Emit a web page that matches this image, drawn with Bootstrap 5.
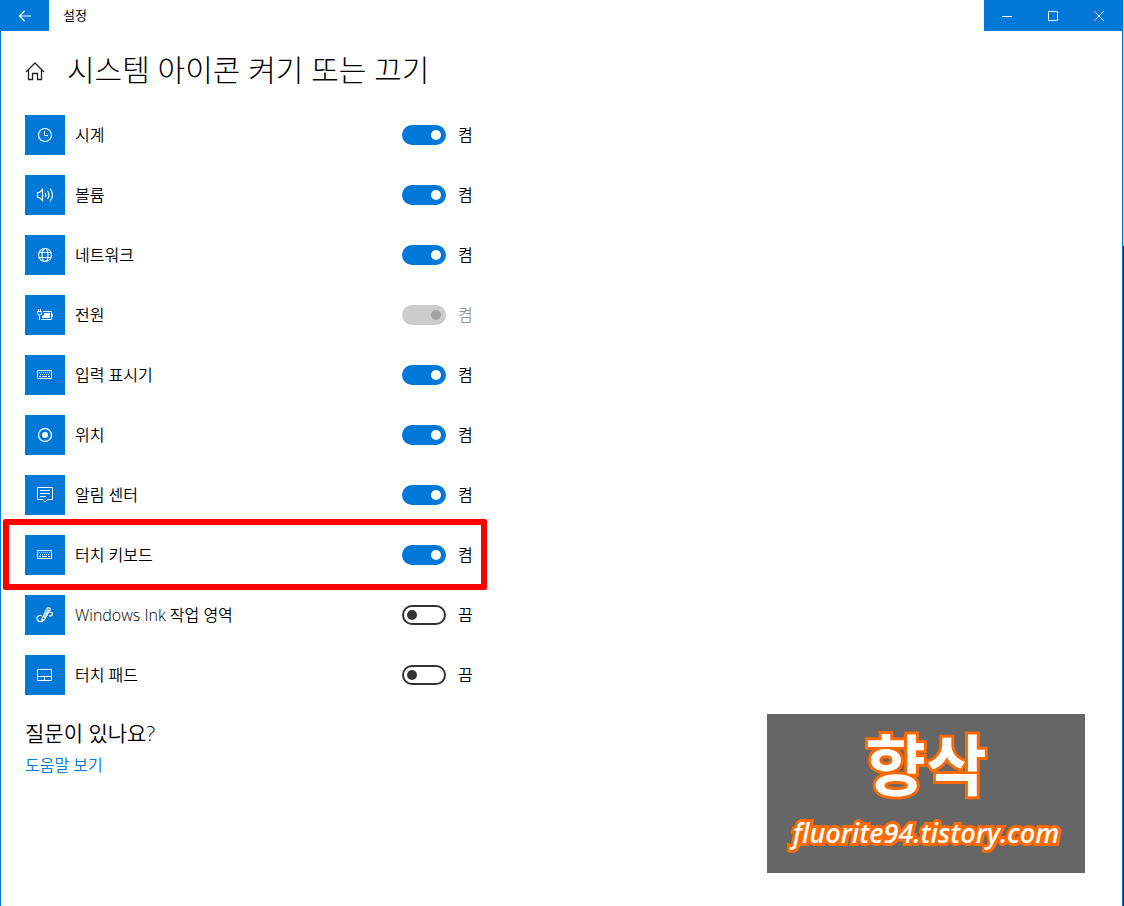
<!DOCTYPE html>
<html lang="ko">
<head>
<meta charset="utf-8">
<meta name="viewport" content="width=device-width, initial-scale=1">
<title>설정</title>
<link href="https://cdn.jsdelivr.net/npm/bootstrap@5.3.0/dist/css/bootstrap.min.css" rel="stylesheet">
<style>
  :root { --accent: #0078d7; }
  body { font-family: "Open Sans", "Noto Sans CJK KR", sans-serif; font-size: 16px; font-weight: 350; line-height: 20px; color: #000; background: #fff; }
  .app-window { border-left: 1px solid var(--accent); border-right: 1px solid var(--accent); }
  .desktop-edge { width: 1px; background: linear-gradient(#c4ccd4 246px, #000 246px); }
  .bar-btn { width: 46px; height: 31px; border: 0; padding: 0; background: var(--accent); color: #fff; }
  .bar-btn.back { width: 48px; }
  .bar-title { font-size: 13px; font-weight: 400; padding: 0 0 2px 14px; }
  svg { display: block; fill: none; stroke: currentColor; }
  .page-body { padding: 19px 24px 24px; }
  .page-title { font-size: 30px; line-height: 40px; padding-bottom: 2px; font-weight: 300; }
  .page-head { gap: 22px; margin-bottom: 23px; }
  .home-link { color: #222; }
  .setting-list { max-width: 448px; gap: 20px; }
  .setting { gap: 12px; }
  .setting label { margin-left: -2px; }
  .tile { width: 40px; height: 40px; background: var(--accent); color: #fff; }
  .state { width: 15px; white-space: nowrap; }
  .toggle { appearance: none; width: 44px; height: 20px; margin: 0; padding: 3px; border: 2px solid #333; border-radius: 10px; display: flex; align-items: center; background: #fff; color: #333; }
  .toggle::before { content: ""; width: 10px; height: 10px; border-radius: 50%; background: currentColor; }
  .toggle:checked { background: var(--accent); border-color: var(--accent); color: #fff; justify-content: flex-end; }
  .toggle:disabled { background: #ccc; border-color: #ccc; color: #a3a3a3; }
  .toggle:disabled + .state { color: #999; }
  .highlight { position: absolute; inset: -16px -14px -15px -22px; border: 6px solid #f00; border-radius: 2px; pointer-events: none; }
  .help-title { font-size: 21px; line-height: 28px; font-weight: 350; margin: 24px 0 8px; }
  .help-link { color: var(--accent); text-decoration: none; }
  .watermark { position: absolute; right: 39px; bottom: 33px; width: 318px; height: 159px; background: #666; color: #fff; -webkit-text-stroke: 6px #ff6a00; paint-order: stroke fill; stroke-linejoin: round; }
  .watermark .mark-name { font-size: 66px; line-height: 80px; font-weight: 700; margin-top: 10px; }
  .watermark .mark-url { font-size: 27px; line-height: 40px; font-weight: 600; font-style: italic; margin-top: 9px; }
</style>
</head>
<body>
<div class="d-flex min-vh-100 position-relative">
  <div class="app-window flex-grow-1">
    <header class="d-flex align-items-center">
      <button class="bar-btn back d-flex align-items-center justify-content-center" type="button" aria-label="뒤로">
        <svg width="14" height="12" viewBox="0 0 14 12" stroke-width="1.2"><path d="M13 6H1.500M6.500 1L1.500 6l5 5"/></svg>
      </button>
      <div class="bar-title me-auto">설정</div>
      <button class="bar-btn d-flex align-items-center justify-content-center" type="button" aria-label="최소화">
        <svg width="10" height="10"><path d="M0 5.500h10"/></svg>
      </button>
      <button class="bar-btn d-flex align-items-center justify-content-center" type="button" aria-label="최대화">
        <svg width="10" height="10"><path d="M.5.500h9v9h-9z"/></svg>
      </button>
      <button class="bar-btn d-flex align-items-center justify-content-center" type="button" aria-label="닫기">
        <svg width="10" height="10"><path d="M0 0l10 10M10 0L0 10"/></svg>
      </button>
    </header>

    <main class="page-body">
      <div class="page-head d-flex align-items-center">
        <a class="home-link" href="#" aria-label="홈"><svg width="20" height="20" stroke-width="1.300"><path d="M1 11L10 2l9 9M3.500 9v9.500h4v-6h5v6h4V9"/></svg></a>
        <h1 class="page-title m-0">시스템 아이콘 켜기 또는 끄기</h1>
      </div>

      <div class="setting-list d-flex flex-column">
        <div class="setting d-flex align-items-center">
          <div class="tile d-flex align-items-center justify-content-center"><svg width="16" height="16"><circle cx="8" cy="8" r="6.500" stroke-width="1.200"/><path d="M7.500 4v4.500H11"/></svg></div>
          <label class="flex-grow-1" for="s1">시계</label>
          <input class="toggle" type="checkbox" role="switch" id="s1" checked><span class="state">켬</span>
        </div>
        <div class="setting d-flex align-items-center">
          <div class="tile d-flex align-items-center justify-content-center"><svg width="18" height="16" stroke-width="1.200"><path d="M1.500 5.500h2l3-3v11l-3-3h-2zM9 6q1.500 2 0 4M11.500 4q3 4 0 8M14 1.500q5 6.500 0 13"/></svg></div>
          <label class="flex-grow-1" for="s2">볼륨</label>
          <input class="toggle" type="checkbox" role="switch" id="s2" checked><span class="state">켬</span>
        </div>
        <div class="setting d-flex align-items-center">
          <div class="tile d-flex align-items-center justify-content-center"><svg width="16" height="16" stroke-width="1.200"><circle cx="8" cy="8" r="6.500"/><ellipse cx="8" cy="8" rx="3" ry="6.500"/><path d="M2 5.500h12M2 10.500h12"/></svg></div>
          <label class="flex-grow-1" for="s3">네트워크</label>
          <input class="toggle" type="checkbox" role="switch" id="s3" checked><span class="state">켬</span>
        </div>
        <div class="setting d-flex align-items-center">
          <div class="tile d-flex align-items-center justify-content-center"><svg width="18" height="16"><path d="M2.500 2v2.500M4.500 2v2.500M1 4.500h5M1.500 5v2l1 1h2l1-1V5M3.500 8v5M7 4.500h8.500v8H5M16.500 7v3"/><path d="M8 6h6v5H6V9l2-1z" fill="currentColor" stroke="none"/></svg></div>
          <label class="flex-grow-1" for="s4">전원</label>
          <input class="toggle" type="checkbox" role="switch" id="s4" checked disabled><span class="state">켬</span>
        </div>
        <div class="setting d-flex align-items-center">
          <div class="tile d-flex align-items-center justify-content-center"><svg width="16" height="16"><path d="M.5 3.500h14v8H.5z"/><path d="M2 5.500h11M3 7.500h10" stroke-dasharray="1 1"/><path d="M2 9.500h2M5 9.500h5M11 9.500h2"/></svg></div>
          <label class="flex-grow-1" for="s5">입력 표시기</label>
          <input class="toggle" type="checkbox" role="switch" id="s5" checked><span class="state">켬</span>
        </div>
        <div class="setting d-flex align-items-center">
          <div class="tile d-flex align-items-center justify-content-center"><svg width="16" height="16"><circle cx="8" cy="8" r="6.500" stroke-width="1.300"/><circle cx="8" cy="8" r="3" fill="currentColor" stroke="none"/></svg></div>
          <label class="flex-grow-1" for="s6">위치</label>
          <input class="toggle" type="checkbox" role="switch" id="s6" checked><span class="state">켬</span>
        </div>
        <div class="setting d-flex align-items-center">
          <div class="tile d-flex align-items-center justify-content-center"><svg width="16" height="18"><path d="M.5 1.500h15v12h-5L8 16l-2.500-2.500h-5zM3 4.500h10M3 7.500h10M3 10.500h6"/></svg></div>
          <label class="flex-grow-1" for="s7">알림 센터</label>
          <input class="toggle" type="checkbox" role="switch" id="s7" checked><span class="state">켬</span>
        </div>
        <div class="setting d-flex align-items-center position-relative">
          <div class="tile d-flex align-items-center justify-content-center"><svg width="16" height="16"><path d="M.5 3.500h14v8H.5z"/><path d="M2 5.500h11M3 7.500h10" stroke-dasharray="1 1"/><path d="M2 9.500h2M5 9.500h5M11 9.500h2"/></svg></div>
          <label class="flex-grow-1" for="s8">터치 키보드</label>
          <input class="toggle" type="checkbox" role="switch" id="s8" checked><span class="state">켬</span>
          <div class="highlight"></div>
        </div>
        <div class="setting d-flex align-items-center">
          <div class="tile d-flex align-items-center justify-content-center"><svg width="18" height="18" stroke-width="1.200"><path d="M5.500 9.500H3.500Q1 10 1 12.500T3.500 15.500T6.500 13.500M6 12.500L10.500 3.500Q12 1 13.500 2T13.500 4.500L8.500 13.500 6 15.500zM8 12L12.500 3.500M13.500 6.500q3-.5 3 1.500T13 10"/></svg></div>
          <label class="flex-grow-1" for="s9">Windows Ink 작업 영역</label>
          <input class="toggle" type="checkbox" role="switch" id="s9"><span class="state">끔</span>
        </div>
        <div class="setting d-flex align-items-center">
          <div class="tile d-flex align-items-center justify-content-center"><svg width="16" height="16"><path d="M.5 2.500h14v11H.5zM.5 9.500h14M7.500 9.500v4"/></svg></div>
          <label class="flex-grow-1" for="s10">터치 패드</label>
          <input class="toggle" type="checkbox" role="switch" id="s10"><span class="state">끔</span>
        </div>
      </div>

      <h2 class="help-title">질문이 있나요?</h2>
      <a class="help-link" href="#">도움말 보기</a>
    </main>
  </div>
  <div class="desktop-edge"></div>
  <div class="watermark text-center">
    <div class="mark-name">향삭</div>
    <div class="mark-url">fluorite94.tistory.com</div>
  </div>
</div>
<script src="https://cdn.jsdelivr.net/npm/bootstrap@5.3.0/dist/js/bootstrap.bundle.min.js"></script>
</body>
</html>
